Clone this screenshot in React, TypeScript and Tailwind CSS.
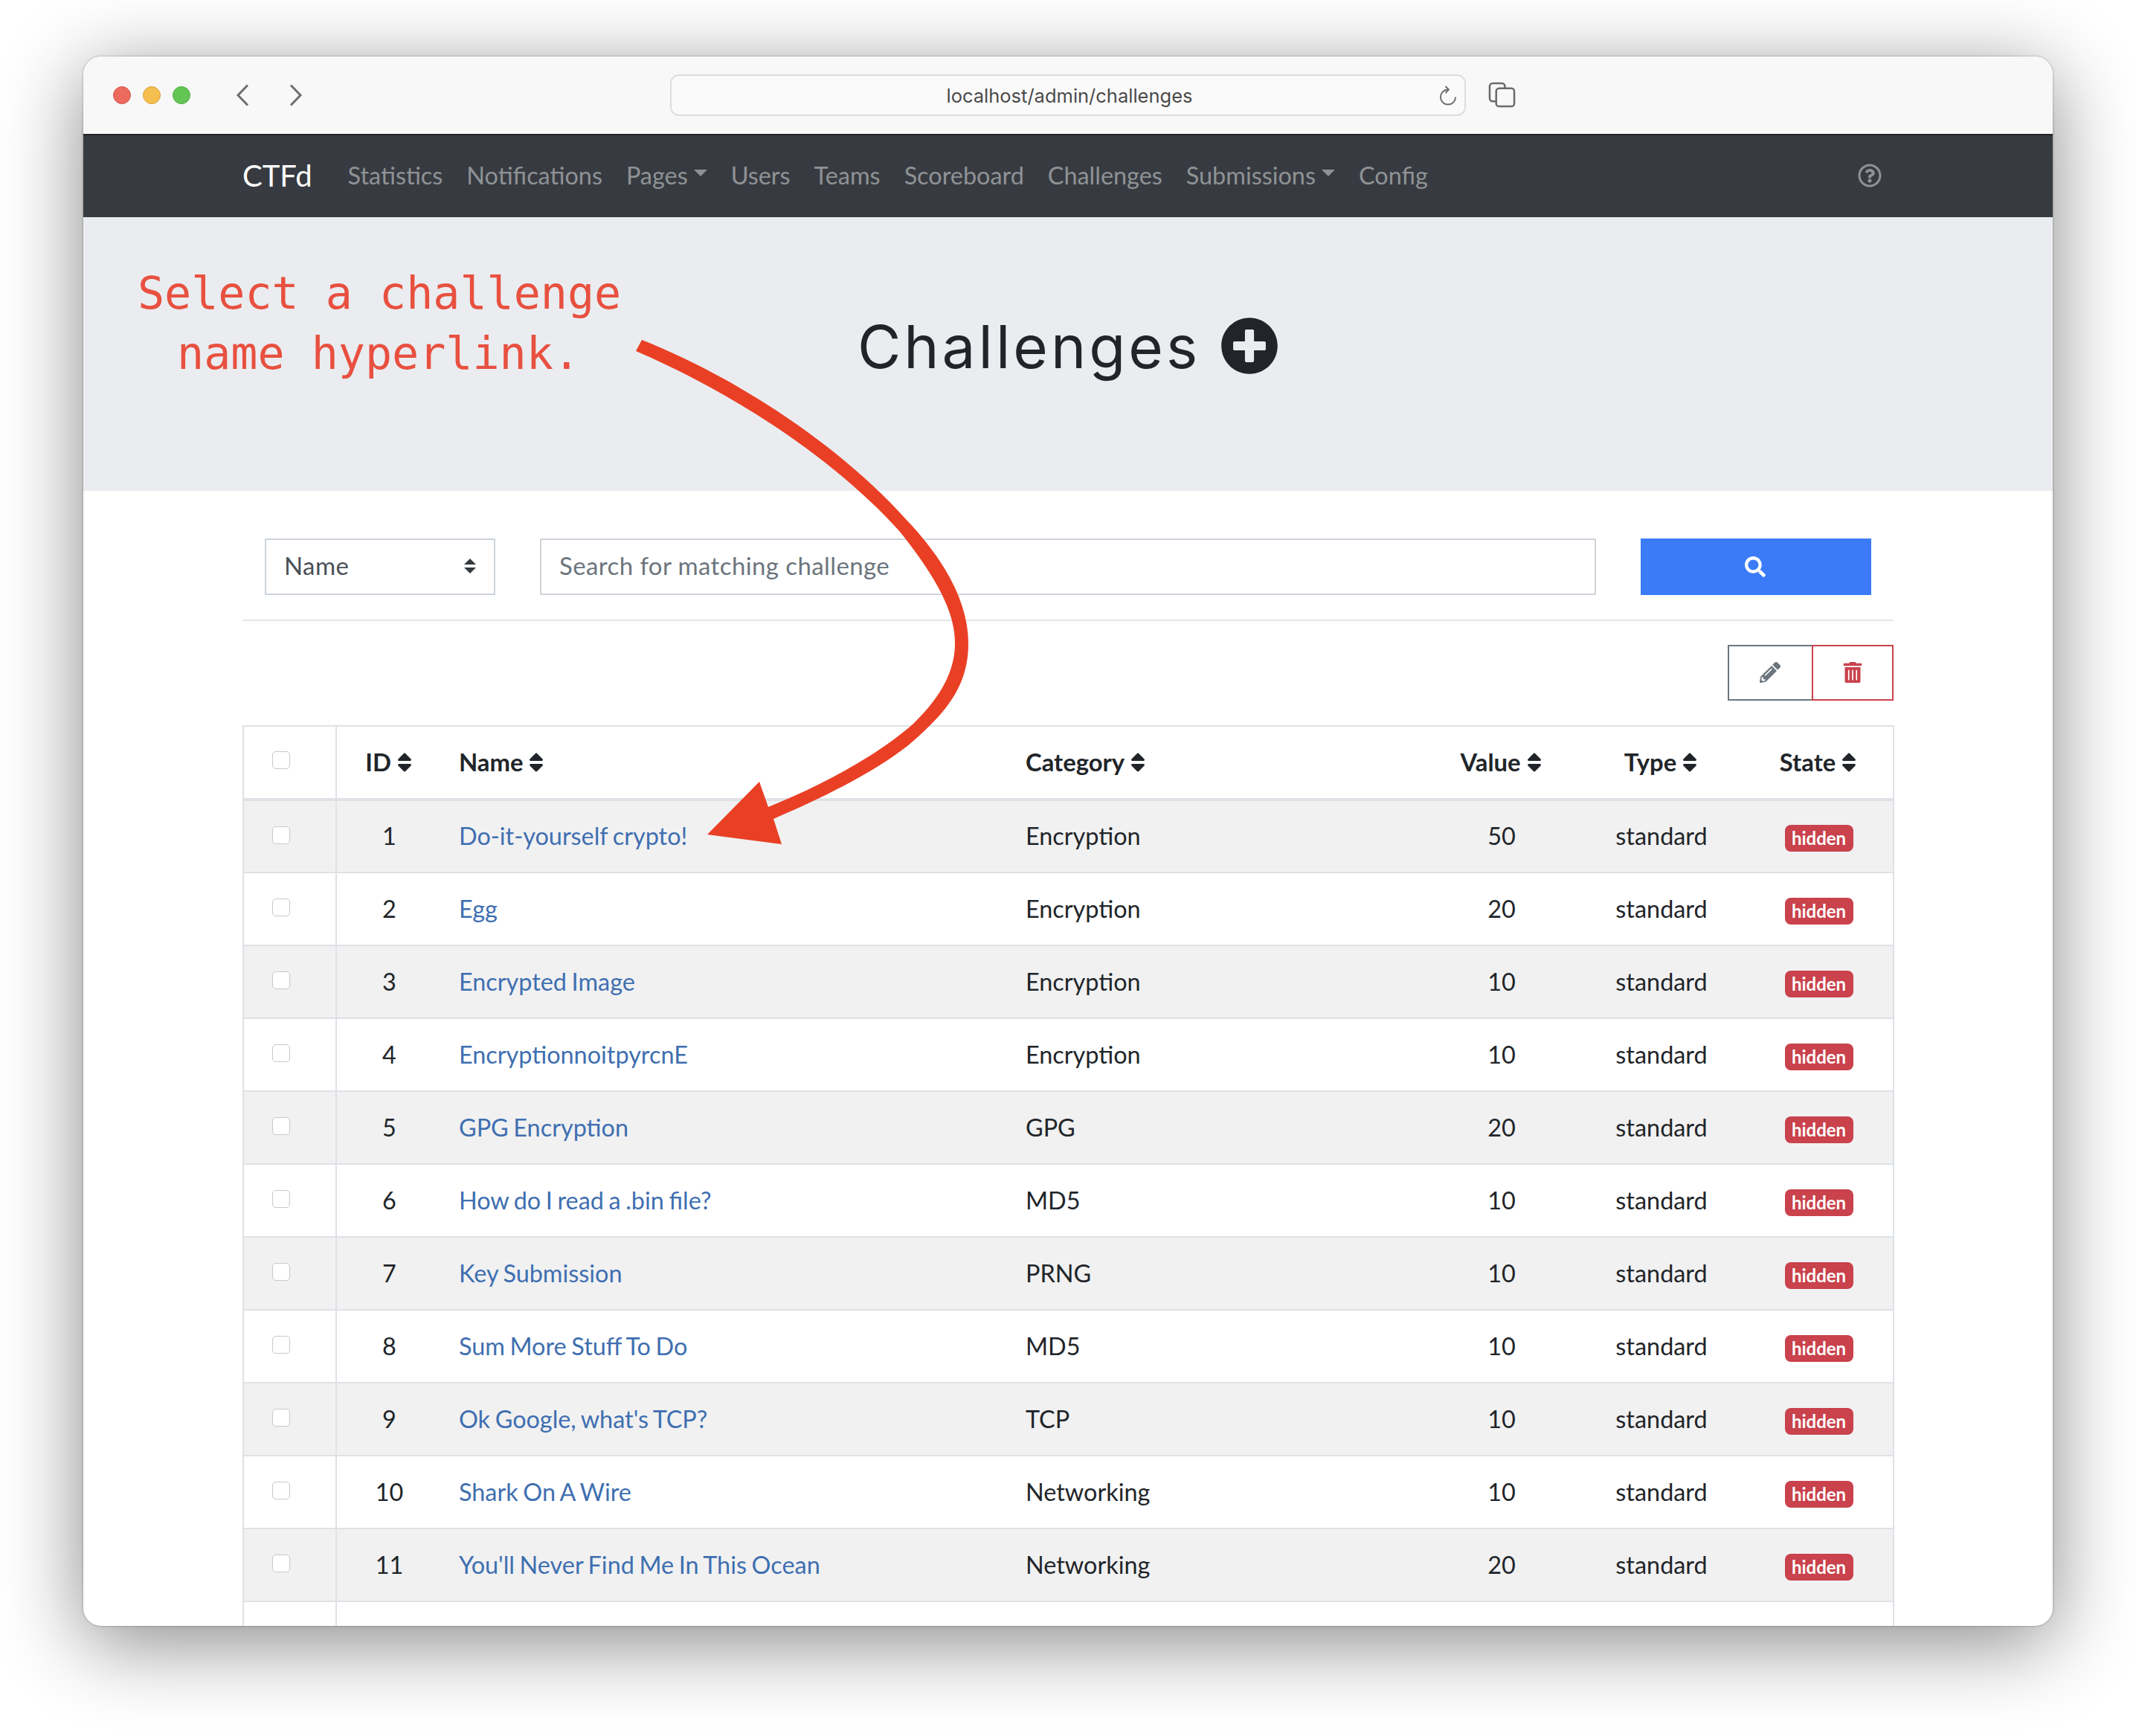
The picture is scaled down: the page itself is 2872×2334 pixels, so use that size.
import { FaPencilAlt, FaPlusCircle, FaRegQuestionCircle, FaSearch, FaSort, FaTrashAlt } from 'react-icons/fa';

const CHALLENGES = [
  { id: 1, name: 'Do-it-yourself crypto!', category: 'Encryption', value: 50 },
  { id: 2, name: 'Egg', category: 'Encryption', value: 20 },
  { id: 3, name: 'Encrypted Image', category: 'Encryption', value: 10 },
  { id: 4, name: 'EncryptionnoitpyrcnE', category: 'Encryption', value: 10 },
  { id: 5, name: 'GPG Encryption', category: 'GPG', value: 20 },
  { id: 6, name: 'How do I read a .bin file?', category: 'MD5', value: 10 },
  { id: 7, name: 'Key Submission', category: 'PRNG', value: 10 },
  { id: 8, name: 'Sum More Stuff To Do', category: 'MD5', value: 10 },
  { id: 9, name: "Ok Google, what's TCP?", category: 'TCP', value: 10 },
  { id: 10, name: 'Shark On A Wire', category: 'Networking', value: 10 },
  { id: 11, name: "You'll Never Find Me In This Ocean", category: 'Networking', value: 20 },
];

function Caret() {
  return <span className="ml-[8px] mt-[-6px] inline-block border-x-[9px] border-t-[9px] border-x-transparent border-t-[#8f9295]" />;
}

function NavLink({ label, caret }: { label: string; caret?: boolean }) {
  return (
    <a className="flex items-center text-[#8f9295]">
      {label}
      {caret && <Caret />}
    </a>
  );
}

function TitleBar() {
  return (
    <div className="relative flex h-[104px] shrink-0 items-center bg-[#f8f8f8] pl-[40px]">
      <div className="flex gap-[16px]">
        <span className="h-[24px] w-[24px] rounded-full border border-[#d9574e] bg-[#ed6a5e]" />
        <span className="h-[24px] w-[24px] rounded-full border border-[#d8a23a] bg-[#f5bf4f]" />
        <span className="h-[24px] w-[24px] rounded-full border border-[#4fae41] bg-[#62c554]" />
      </div>
      <svg className="ml-[61px]" width="18" height="30" viewBox="0 0 18 30" fill="none" stroke="#6e6e6e" strokeWidth="3">
        <path d="M16 1.5 3 15l13 13.5" />
      </svg>
      <svg className="ml-[54px]" width="18" height="30" viewBox="0 0 18 30" fill="none" stroke="#6e6e6e" strokeWidth="3">
        <path d="M2 1.5 15 15 2 28.5" />
      </svg>
      <div className="relative ml-[494px] flex h-[56px] w-[1070px] items-center justify-center rounded-[12px] border-2 border-[#dedede] bg-[#fafafa] pl-[4px] pt-[3px] font-['Inter',sans-serif] text-[25.500px] text-[#4a4a4a]">
        localhost/admin/challenges
        <svg className="absolute right-[10px] top-[13px]" width="24" height="28" viewBox="0 0 24 28" fill="none" stroke="#6b6b6b" strokeWidth="1.8">
          <path d="M12 5.5a10 10 0 1 0 10 10" />
          <path d="M8.5 1 13 5.5 8.500 10" />
        </svg>
      </div>
      <svg className="ml-[30px] mt-[-2px]" width="37" height="35" viewBox="0 0 38 36" fill="none" stroke="#6b6b6b" strokeWidth="2.6">
        <path d="M11 27H6a4 4 0 0 1-4-4V6a4 4 0 0 1 4-4h13a4 4 0 0 1 4 4v3" />
        <rect x="11" y="9" width="25" height="25" rx="4" />
      </svg>
    </div>
  );
}

function NavBar() {
  return (
    <div className="flex h-[112px] shrink-0 items-center border-t-2 border-[#212428] bg-[#373b41] pb-[2px] pl-[214px] pr-[230px] text-[32.400px]">
      <a className="mr-[48px] text-[40px] text-white">CTFd</a>
      <div className="flex flex-1 items-center gap-[32px]">
        <NavLink label="Statistics" />
        <NavLink label="Notifications" />
        <NavLink label="Pages" caret />
        <NavLink label="Users" />
        <NavLink label="Teams" />
        <NavLink label="Scoreboard" />
        <NavLink label="Challenges" />
        <NavLink label="Submissions" caret />
        <NavLink label="Config" />
      </div>
      <FaRegQuestionCircle size={32} className="text-[#8f9295]" />
    </div>
  );
}

function Jumbotron() {
  return (
    <div className="flex h-[368px] shrink-0 items-center justify-center gap-[27px] bg-[#eaecf0] pb-[22px]">
      <h1 className="pt-[2px] font-['Inter',sans-serif] text-[80px] font-normal leading-[96px] tracking-[4px] text-[#212529]">Challenges</h1>
      <FaPlusCircle size={78} className="text-[#212529]" />
    </div>
  );
}

function SearchBar() {
  return (
    <div className="flex gap-[60px] px-[30px] text-[33px] tracking-[0.4px]">
      <div className="flex h-[76px] w-[310px] items-center justify-between border-2 border-[#ced4da] pb-[2px] pl-[24px] pr-[24px] text-[#495057]">
        Name
        <svg width="16" height="20" viewBox="0 0 16 20" fill="#343a40">
          <path d="M8 0l8 8H0zM8 20l8-8H0z" />
        </svg>
      </div>
      <div className="flex h-[76px] flex-1 items-center border-2 border-[#ced4da] pb-[2px] pl-[24px] text-[#6c757d]">Search for matching challenge</div>
      <button type="button" className="flex h-[76px] w-[310px] items-center justify-center bg-[#3b7bf8] pr-[2px] text-white">
        <FaSearch size={28} />
      </button>
    </div>
  );
}

function SortHeader({ label, align }: { label: string; align: 'left' | 'center' }) {
  return (
    <th className={align === 'left' ? 'pb-[4px] pl-[23px] text-left text-[32.800px] font-bold' : 'pb-[4px] pl-[4px] text-center text-[32.800px] font-bold'}>
      <span className="inline-flex items-center gap-[2px] align-middle">
        {label}
        <FaSort size={32} />
      </span>
    </th>
  );
}

function Checkbox() {
  return <span className="ml-[38px] block h-[24px] w-[24px] rounded-[5px] border border-[#c8c8c8] bg-white" />;
}

function ChallengeTable() {
  return (
    <table className="w-[2219px] table-fixed border-collapse border-2 border-[#dee2e6] text-[#212529] [word-spacing:-1.7px]">
      <colgroup>
        <col className="w-[125px]" />
        <col className="w-[142px]" />
        <col className="w-[762px]" />
        <col className="w-[560px]" />
        <col className="w-[206px]" />
        <col className="w-[224px]" />
        <col className="w-[200px]" />
      </colgroup>
      <thead>
        <tr className="h-[99px] border-b-4 border-[#dee2e6]">
          <th className="border-r-2 border-[#dee2e6] pb-[6px]">
            <Checkbox />
          </th>
          <SortHeader label="ID" align="center" />
          <SortHeader label="Name" align="left" />
          <SortHeader label="Category" align="left" />
          <SortHeader label="Value" align="center" />
          <SortHeader label="Type" align="center" />
          <SortHeader label="State" align="center" />
        </tr>
      </thead>
      <tbody>
        {CHALLENGES.map((c) => (
          <tr key={c.id} className={`h-[98px] border-b-2 border-[#dee2e6] ${c.id % 2 === 1 ? 'bg-[#f1f1f2]' : 'bg-white'}`}>
            <td className="border-r-2 border-[#dee2e6] pb-[4px]">
              <Checkbox />
            </td>
            <td className="text-center">{c.id}</td>
            <td className="pl-[23px] text-[#3f6fb0]">{c.name}</td>
            <td className="pl-[23px]">{c.category}</td>
            <td className="text-center">{c.value}</td>
            <td className="text-center">standard</td>
            <td className="text-center">
              <span className="inline-flex h-[36px] w-[92px] items-center justify-center rounded-[8px] bg-[#c9424c] text-[24px] font-bold text-white">hidden</span>
            </td>
          </tr>
        ))}
        <tr className="h-[98px]">
          <td className="border-r-2 border-[#dee2e6]" />
          <td colSpan={6} />
        </tr>
      </tbody>
    </table>
  );
}

function Arrow() {
  return (
    <svg className="pointer-events-none absolute left-0 top-0" width="2648" height="2110" viewBox="112 76 2648 2110" fill="#e94025">
      <path d="M863 457C990 507 1130 600 1217 697C1270 752 1302 810 1302 865C1302 925 1270 960 1220 1003C1170 1042 1100 1075 1040 1101L1051 1135L951 1122L1021 1051L1033 1085C1095 1060 1175 1020 1228 973C1262 940 1284 905 1284 865C1284 825 1262 780 1210 715C1125 620 990 530 855 472Z" />
    </svg>
  );
}

export default function App() {
  return (
    <div className="h-[2334px] w-[2872px] overflow-hidden bg-white pl-[112px] pt-[76px] font-['Lato',sans-serif] text-[32.400px]">
      <div className="relative flex h-[2110px] w-[2648px] flex-col overflow-hidden rounded-[24px] bg-white shadow-[0_22px_110px_rgba(0,0,0,0.47),0_0_3px_rgba(0,0,0,0.35)]">
        <TitleBar />
        <NavBar />
        <Jumbotron />
        <div className="px-[214px] pt-[64px]">
          <SearchBar />
          <hr className="mt-[33px] border-t-2 border-[#e4e6e8]" />
          <div className="mt-[32px] flex justify-end">
            <button type="button" className="flex h-[75px] w-[113px] items-center justify-center border-2 border-r-0 border-[#6c757d] pb-[2px] pr-[2px] text-[#6c757d]">
              <FaPencilAlt size={28} />
            </button>
            <button type="button" className="flex h-[75px] w-[110px] items-center justify-center border-2 border-[#c9424c] pb-[2px] text-[#c9424c]">
              <FaTrashAlt size={28} />
            </button>
          </div>
          <div className="mt-[33px]">
            <ChallengeTable />
          </div>
        </div>
        <div className="absolute left-[73px] top-[278px] w-[648px] whitespace-pre text-center font-['DejaVu_Sans_Mono',monospace] text-[60px] leading-[81px] text-[#e8503f]">
          Select a challenge{'\n'}name hyperlink.
        </div>
        <Arrow />
      </div>
    </div>
  );
}
